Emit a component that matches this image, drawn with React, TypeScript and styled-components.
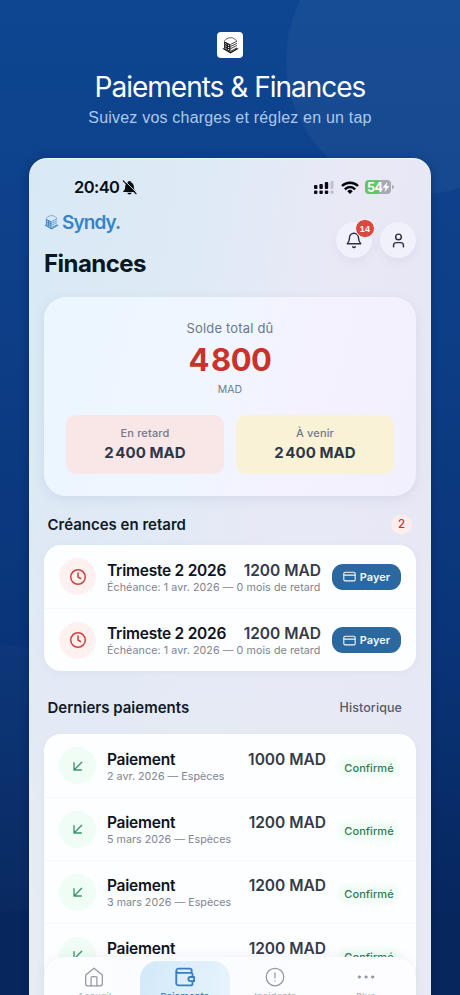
import React from "react";
import styled, { createGlobalStyle } from "styled-components";

const GlobalStyle = createGlobalStyle`
  * { box-sizing: border-box; }
  body { margin: 0; font-family: Inter, "Liberation Sans", sans-serif; overflow: hidden; }
  svg { display: block; flex: none; }
`;

const Page = styled.main`
  position: relative;
  height: 995px;
  overflow: hidden;
  display: flex;
  flex-direction: column;
  align-items: center;
  padding-top: 32px;
  background: linear-gradient(180deg, #0e4691 0%, #0d3f88 30%, #0a3478 65%, #06265d 93%, #06265d 100%);
`;

const Halo = styled.div<{ $x: number; $y: number; $alpha: number }>`
  position: absolute;
  left: ${(p) => p.$x}px;
  top: ${(p) => p.$y}px;
  width: 268px;
  height: 268px;
  border-radius: 50%;
  background: rgba(255, 255, 255, ${(p) => p.$alpha});
`;

const LogoTile = styled.div`
  position: relative;
  flex: none;
  width: 26px;
  height: 26px;
  border-radius: 4px;
  background: #fff;
  display: grid;
  place-items: center;
`;

const Headline = styled.h1`
  position: relative;
  margin: 11px 0 0;
  font-size: 28px;
  line-height: 36px;
  font-weight: 400;
  letter-spacing: -1px;
  color: #fff;
  white-space: nowrap;
`;

const Tagline = styled.p`
  position: relative;
  margin: 3px 0 0;
  font-family: "Liberation Sans", sans-serif;
  font-size: 16px;
  line-height: 20px;
  letter-spacing: 0.2px;
  color: #adc8ec;
  white-space: nowrap;
`;

const Phone = styled.section`
  position: relative;
  width: 402px;
  height: 860px;
  margin-top: 30px;
  flex: none;
  padding: 0 15px;
  border-radius: 18px 18px 0 0;
  background:
    linear-gradient(180deg, rgba(230, 233, 243, 0) 28%, rgba(229, 234, 245, 0.75) 60%, rgba(232, 235, 243, 0.95) 90%),
    linear-gradient(100deg, #d8e9f5 0%, #dfeaf6 35%, #e9e9f6 58%, #e7e5f3 100%);
  box-shadow: 0 2px 10px rgba(0, 20, 60, 0.4), inset 0 1px 1px rgba(255, 255, 255, 0.5);
`;

const StatusBar = styled.div`
  display: flex;
  align-items: center;
  justify-content: space-between;
  height: 20px;
  margin-top: 19px;
  padding: 0 25px 0 30px;
`;

const Clock = styled.div`
  display: flex;
  align-items: center;
  gap: 3px;
  font-size: 16.5px;
  font-weight: 600;
  letter-spacing: -0.6px;
  color: #080d12;
`;

const Signals = styled.div`
  display: flex;
  align-items: center;
  gap: 6.5px;
`;

const Battery = styled.div`
  position: relative;
  display: flex;
  align-items: center;
  width: 26px;
  height: 14px;
  padding-left: 2px;
  border-radius: 4px;
  color: #fff;
  font-size: 12.5px;
  font-weight: 700;
  letter-spacing: -0.5px;
  background: linear-gradient(90deg, #5fc866 0 55%, #a9a9b4 55%);
  &::after {
    content: "";
    position: absolute;
    right: -2.5px;
    top: 5px;
    width: 1.5px;
    height: 4px;
    border-radius: 0 2px 2px 0;
    background: #a9a9b4;
  }
`;

const Header = styled.header`
  display: flex;
  justify-content: space-between;
  height: 100px;
  padding-top: 1px;
`;

const Brand = styled.div`
  display: flex;
  align-items: center;
  gap: 3px;
  height: 24px;
  margin-top: 12px;
  font-size: 19px;
  font-weight: 600;
  letter-spacing: -0.9px;
  color: #3783c6;
`;

const PageTitle = styled.h2`
  margin: 16px 0 0;
  font-size: 24px;
  line-height: 28px;
  font-weight: 700;
  letter-spacing: -0.55px;
  color: #0a1622;
`;

const Actions = styled.div`
  display: flex;
  gap: 8px;
  padding-top: 24px;
`;

const RoundButton = styled.button`
  position: relative;
  width: 36px;
  height: 36px;
  padding: 0;
  border: 0;
  border-radius: 50%;
  display: grid;
  place-items: center;
  color: #2a3047;
  background: #f1f1fc;
  box-shadow: 0 4px 10px rgba(90, 90, 140, 0.07);
`;

const CountBadge = styled.span`
  position: absolute;
  top: -3px;
  right: -3px;
  width: 20px;
  height: 19px;
  border: 1px solid #fdf5f8;
  border-radius: 10px;
  display: grid;
  place-items: center;
  background: #dc4840;
  color: #fff;
  font-size: 9px;
  font-weight: 700;
  letter-spacing: 0.2px;
`;

const Balance = styled.section`
  height: 199px;
  padding: 21px 22px 0;
  border-radius: 22px;
  text-align: center;
  background: linear-gradient(105deg, #ebf6ff 0%, #f0f6ff 45%, #f3f2fe 65%, #f2f0fc 100%);
  box-shadow: 0 3px 12px rgba(80, 90, 140, 0.1);
`;

const BalanceLabel = styled.div`
  font-size: 13px;
  line-height: 20px;
  letter-spacing: 0.18px;
  color: #6f7688;
`;

const BalanceValue = styled.div`
  margin-top: 3px;
  font-size: 31px;
  line-height: 38px;
  font-weight: 700;
  letter-spacing: -0.55px;
  color: #c9332b;
  span { margin-left: 2px; }
`;

const Currency = styled.div`
  margin-top: 3px;
  font-size: 10.5px;
  line-height: 16px;
  color: #737a8c;
`;

const Split = styled.div`
  display: grid;
  grid-template-columns: 1fr 1fr;
  gap: 12px;
  margin-top: 17px;
`;

const SplitTile = styled.div<{ $tone: string }>`
  height: 59px;
  padding-top: 11px;
  border-radius: 10px;
  background: ${(p) => p.$tone};
`;

const SplitLabel = styled.div`
  font-size: 11px;
  line-height: 15px;
  font-weight: 500;
  letter-spacing: 0.15px;
  color: #72788a;
`;

const SplitValue = styled.div`
  margin-top: 2px;
  font-size: 15px;
  line-height: 20px;
  font-weight: 700;
  letter-spacing: 0.06px;
  color: #2d3748;
  span { margin-left: 1.5px; }
`;

const SectionHead = styled.div<{ $top: number }>`
  display: flex;
  align-items: center;
  justify-content: space-between;
  height: 20px;
  margin-top: ${(p) => p.$top}px;
  padding: 0 4px 0 3.5px;
`;

const SectionTitle = styled.h3`
  margin: 0;
  font-size: 15px;
  font-weight: 600;
  letter-spacing: 0;
  color: #111a28;
`;

const CountPill = styled.span`
  width: 21px;
  height: 19px;
  border-radius: 10px;
  display: grid;
  place-items: center;
  background: #fdeeec;
  color: #c5302c;
  font-size: 11.5px;
  font-weight: 500;
`;

const HistoryLink = styled.a`
  margin-right: 10px;
  font-size: 12.5px;
  font-weight: 500;
  letter-spacing: 0.08px;
  color: #535b6c;
`;

const List = styled.div<{ $top: number }>`
  margin-top: ${(p) => p.$top}px;
  border-radius: 17px;
  background: #fdfeff;
  box-shadow: 0 2px 8px rgba(90, 100, 150, 0.05);
`;

const Row = styled.div`
  display: flex;
  align-items: center;
  height: 63px;
  padding: 0 15px;
  & + & { border-top: 1px solid #f6f7fa; }
`;

const Bubble = styled.div<{ $bg: string; $fg: string }>`
  width: 37px;
  height: 37px;
  flex: none;
  border-radius: 50%;
  display: grid;
  place-items: center;
  background: ${(p) => p.$bg};
  color: ${(p) => p.$fg};
`;

const RowBody = styled.div<{ $width: number }>`
  width: ${(p) => p.$width}px;
  flex: none;
  margin-left: 11px;
  margin-top: 2px;
`;

const RowTop = styled.div`
  display: flex;
  justify-content: space-between;
  line-height: 19px;
  font-size: 15.5px;
  font-weight: 600;
  letter-spacing: -0.24px;
  color: #0e1320;
  white-space: nowrap;
`;

const Amount = styled.span`
  color: #343a49;
  letter-spacing: 0;
`;

const RowSub = styled.div<{ $spacing: number }>`
  font-size: 10.7px;
  line-height: 15px;
  letter-spacing: ${(p) => p.$spacing}px;
  color: #7d8492;
  white-space: nowrap;
`;

const PayButton = styled.button`
  display: flex;
  align-items: center;
  justify-content: center;
  gap: 4px;
  width: 69px;
  height: 26px;
  margin-left: auto;
  padding: 0;
  border: 0;
  border-radius: 11px;
  background: #2a689f;
  color: #f3f8fd;
  font: 600 11px Inter, sans-serif;
`;

const Confirmed = styled.span`
  width: 58px;
  height: 15px;
  margin: 4px 3px 0 auto;
  border-radius: 8px;
  display: grid;
  place-items: center;
  background: #f1fcf6;
  box-shadow: 0 0 4px 2px #f1fcf6;
  color: #337a58;
  font-size: 11px;
  font-weight: 500;
  letter-spacing: 0.05px;
`;

const TabBar = styled.nav`
  position: absolute;
  left: 15px;
  right: 15px;
  top: 799px;
  height: 60px;
  padding: 4px 5px;
  display: grid;
  grid-template-columns: repeat(4, 1fr);
  border-radius: 22px 22px 0 0;
  background: linear-gradient(90deg, #fcfdfe, #fafcff 35%, #fdfdff);
  box-shadow: 0 -3px 10px rgba(120, 130, 160, 0.08);
`;

const Tab = styled.div<{ $active?: boolean }>`
  display: flex;
  flex-direction: column;
  align-items: center;
  gap: 3px;
  padding-top: 6px;
  border-radius: 18px 18px 0 0;
  font-size: 9.5px;
  line-height: 14px;
  font-weight: ${(p) => (p.$active ? 600 : 500)};
  letter-spacing: 0.05px;
  color: ${(p) => (p.$active ? "#3f86ca" : "#b4b9c4")};
  background: ${(p) => (p.$active ? "linear-gradient(100deg, #d3e9f9, #e6f4fd)" : "transparent")};
  svg { color: ${(p) => (p.$active ? "#377fc4" : "#9298a5")}; }
`;

const BuildingLogo = ({ size, color, paper }: { size: number; color: string; paper: string }) => (
  <svg width={size} height={size} viewBox="0 0 32 32">
    <path d="M1 22 16 14.5 31 22 16 31Z" fill={color} />
    <path d="M4 8 16 1 28 8V21L16 28 4 21Z" fill={paper} />
    <path d="M4 8 16 14V28L4 21Z" fill={color} />
    <path d="M4 8 7 4.5 13 1.5 20 1.5 28 7" fill="none" stroke={color} strokeWidth="1.2" />
    <path d="M16 14 28 8M16 18 28 12M16 22 28 16M16 27 28 20.5" fill="none" stroke={color} strokeWidth="1.5" />
    <path d="M6 12.5 8.5 14M11 15 13.8 16.5M6 16.5 8.5 18M11 19 13.8 20.5M6 20.5 8.5 22M11 23 13.8 24.5" stroke={paper} strokeWidth="1.8" />
  </svg>
);

const BellOff = () => (
  <svg width="15" height="15" viewBox="0 0 24 24">
    <path d="M12 1.500a2.500 2.500 0 0 0-2.500 2.200C6.500 5 5 8 5 11c0 4-1 5-3 6.500V19h20v-1.500C20 16 19 15 19 11c0-3-1.500-6-4.500-7.300A2.500 2.500 0 0 0 12 1.500Z" fill="#080d12" />
    <path d="M8.500 20.500a3.500 2.800 0 0 0 7 0Z" fill="#080d12" />
    <path d="m4 1 20 20" stroke="#dce8f5" strokeWidth="1.600" />
    <path d="m2 1.500 20.500 20.500" stroke="#080d12" strokeWidth="1.800" strokeLinecap="round" />
  </svg>
);

const Cellular = () => (
  <svg width="20" height="13" viewBox="0 0 20 13" fill="#0a0a12">
    <rect x="0" y="4" width="3.400" height="4" rx="1" />
    <rect x="5.400" y="3" width="3.400" height="5" rx="1" />
    <rect x="10.800" y="1" width="3.400" height="7" rx="1" />
    <rect x="16.400" y="0" width="3.200" height="8" rx="1" fill="#c3c3cf" />
    <rect x="0" y="9.500" width="3.400" height="3.500" rx="1" />
    <rect x="5.400" y="9.500" width="3.400" height="3.500" rx="1" />
    <rect x="10.800" y="9.500" width="3.400" height="3.500" rx="1" />
    <rect x="16.400" y="9.500" width="3.200" height="3.500" rx="1" fill="#c3c3cf" />
  </svg>
);

const Wifi = () => (
  <svg width="18" height="13" viewBox="0 0 18 13" fill="none" stroke="#05050c" strokeWidth="2.500">
    <path d="M1 5A11.200 11.200 0 0 1 17 5" />
    <path d="M3.900 8.300A7 7 0 0 1 14.100 8.300" />
    <path d="M9 12.900 6.300 10.200A3.800 3.800 0 0 1 11.700 10.200Z" fill="#05050c" stroke="none" />
  </svg>
);

const Bolt = () => (
  <svg width="8" height="10" viewBox="0 0 7 10">
    <path d="M4.800 0 0 5.800H3L2 10 7 4H4Z" fill="#fff" />
  </svg>
);

const Stroke = ({ size, width = 2, children }: { size: number; width?: number; children: React.ReactNode }) => (
  <svg width={size} height={size} viewBox="0 0 24 24" fill="none" stroke="currentColor" strokeWidth={width} strokeLinecap="round" strokeLinejoin="round">
    {children}
  </svg>
);

const debts = ["Trimeste 2 2026", "Trimeste 2 2026"];

const payments = [
  { amount: "1000 MAD", date: "2 avr. 2026" },
  { amount: "1200 MAD", date: "5 mars 2026" },
  { amount: "1200 MAD", date: "3 mars 2026" },
  { amount: "1200 MAD", date: "2 mars 2026" },
];

export default function App() {
  return (
    <>
      <GlobalStyle />
      <Page>
        <Halo $x={286} $y={-74} $alpha={0.04} />
        <Halo $x={-134} $y={644} $alpha={0.016} />
        <LogoTile>
          <BuildingLogo size={17} color="#111" paper="#fff" />
        </LogoTile>
        <Headline>Paiements &amp; Finances</Headline>
        <Tagline>Suivez vos charges et réglez en un tap</Tagline>

        <Phone>
          <StatusBar>
            <Clock>
              20:40
              <BellOff />
            </Clock>
            <Signals>
              <Cellular />
              <Wifi />
              <Battery>
                54
                <Bolt />
              </Battery>
            </Signals>
          </StatusBar>

          <Header>
            <div>
              <Brand>
                <BuildingLogo size={15} color="#3e86c6" paper="#dbe9f6" />
                Syndy.
              </Brand>
              <PageTitle>Finances</PageTitle>
            </div>
            <Actions>
              <RoundButton>
                <Stroke size={18} width={1.9}>
                  <path d="M10.300 21a2 2 0 0 0 3.400 0" />
                  <path d="M3 17h18c-1.500-1.500-3-3-3-8A6 6 0 0 0 6 9c0 5-1.500 6.500-3 8Z" />
                </Stroke>
                <CountBadge>14</CountBadge>
              </RoundButton>
              <RoundButton>
                <Stroke size={17}>
                  <circle cx="12" cy="7" r="4" />
                  <path d="M19 21v-2a4 4 0 0 0-4-4H9a4 4 0 0 0-4 4v2" />
                </Stroke>
              </RoundButton>
            </Actions>
          </Header>

          <Balance>
            <BalanceLabel>Solde total dû</BalanceLabel>
            <BalanceValue>4<span>800</span></BalanceValue>
            <Currency>MAD</Currency>
            <Split>
              <SplitTile $tone="#f9e6e7">
                <SplitLabel>En retard</SplitLabel>
                <SplitValue>2<span>400 MAD</span></SplitValue>
              </SplitTile>
              <SplitTile $tone="#f9f2d6">
                <SplitLabel>À venir</SplitLabel>
                <SplitValue>2<span>400 MAD</span></SplitValue>
              </SplitTile>
            </Split>
          </Balance>

          <SectionHead $top={18}>
            <SectionTitle>Créances en retard</SectionTitle>
            <CountPill>2</CountPill>
          </SectionHead>
          <List $top={11}>
            {debts.map((name, i) => (
              <Row key={i}>
                <Bubble $bg="#fff1f0" $fg="#d0403a">
                  <Stroke size={18}>
                    <circle cx="12" cy="12" r="9.700" />
                    <path d="M12 6.500V12l3.500 2" />
                  </Stroke>
                </Bubble>
                <RowBody $width={214}>
                  <RowTop>
                    <span>{name}</span>
                    <Amount>1200 MAD</Amount>
                  </RowTop>
                  <RowSub $spacing={0.08}>Échéance: 1 avr. 2026 — 0 mois de retard</RowSub>
                </RowBody>
                <PayButton>
                  <Stroke size={13}>
                    <rect x="1.500" y="4" width="21" height="16" rx="2.500" />
                    <path d="M2 9.500h20" />
                  </Stroke>
                  Payer
                </PayButton>
              </Row>
            ))}
          </List>

          <SectionHead $top={26}>
            <SectionTitle>Derniers paiements</SectionTitle>
            <HistoryLink>Historique</HistoryLink>
          </SectionHead>
          <List $top={17}>
            {payments.map((p, i) => (
              <Row key={i}>
                <Bubble $bg="#effdf5" $fg="#3b9170">
                  <Stroke size={16}>
                    <path d="M17.500 6.500 6.500 17.500M6 7v11h11" />
                  </Stroke>
                </Bubble>
                <RowBody $width={219}>
                  <RowTop>
                    <span>Paiement</span>
                    <Amount>{p.amount}</Amount>
                  </RowTop>
                  <RowSub $spacing={0.03}>{p.date} — Espèces</RowSub>
                </RowBody>
                <Confirmed>Confirmé</Confirmed>
              </Row>
            ))}
          </List>

          <TabBar>
            <Tab>
              <Stroke size={20} width={1.5}>
                <path d="M2 9.500 12 1.500l10 8V20a2.500 2.500 0 0 1-2.500 2.500h-15A2.500 2.500 0 0 1 2 20Z" />
                <path d="M8.500 22.500V13a1.500 1.500 0 0 1 1.500-1.500h4a1.500 1.500 0 0 1 1.500 1.500v9.500" />
              </Stroke>
              Accueil
            </Tab>
            <Tab $active>
              <Stroke size={20} width={2.2}>
                <path d="M20 7V4a2 2 0 0 0-2-2H4a2.500 2.500 0 0 0 0 5h15a2 2 0 0 1 2 2v3M21 17v3a2 2 0 0 1-2 2H4a2.500 2.500 0 0 1-2.500-2.500v-15" />
                <path d="M23 12v5h-4.500a2.500 2.500 0 0 1 0-5Z" />
              </Stroke>
              Paiements
            </Tab>
            <Tab>
              <Stroke size={20} width={1.5}>
                <circle cx="12" cy="12" r="10.500" />
                <path d="M12 7v6M12 16.500v.3" />
              </Stroke>
              Incidents
            </Tab>
            <Tab>
              <Stroke size={20} width={1}>
                <circle cx="4" cy="12" r="1.400" fill="currentColor" />
                <circle cx="12" cy="12" r="1.400" fill="currentColor" />
                <circle cx="20" cy="12" r="1.400" fill="currentColor" />
              </Stroke>
              Plus
            </Tab>
          </TabBar>
        </Phone>
      </Page>
    </>
  );
}
